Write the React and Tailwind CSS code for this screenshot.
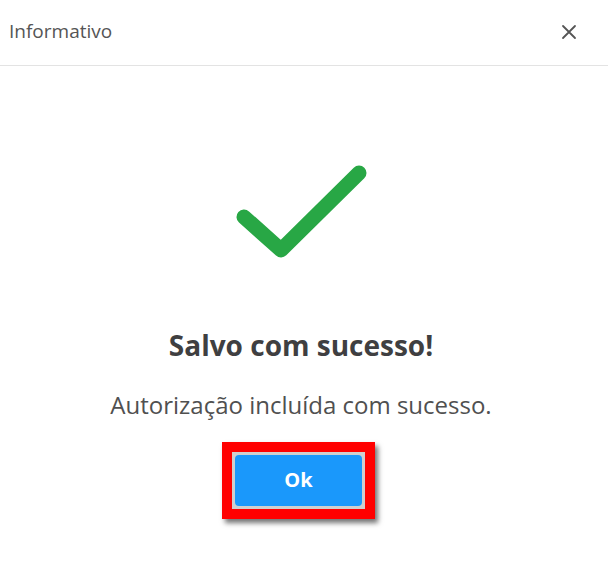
import React from 'react';

const CheckIcon = () => (
  <svg width="140" height="102" viewBox="0 0 140 102" fill="none">
    <path
      d="M13 57 L50 90 L128 13"
      stroke="#28a745"
      strokeWidth="15"
      strokeLinecap="round"
      strokeLinejoin="round"
    />
  </svg>
);

const CloseIcon = () => (
  <svg width="16" height="16" viewBox="0 0 16 16" fill="none">
    <path d="M2 2 L14 14 M14 2 L2 14" stroke="#555" strokeWidth="1.8" strokeLinecap="round" />
  </svg>
);

export default function App() {
  const font = { fontFamily: '"Open Sans", Lato, sans-serif' };

  return (
    <div className="w-[608px] h-[561px] bg-white overflow-hidden" style={font}>
      {/* Header */}
      <div className="h-[66px] flex items-center justify-between pl-[9px] pr-[31px] border-b border-[#e3e3e3]">
        <span className="text-[19px] leading-[26px] text-[#555] -mt-[3px]">Informativo</span>
        <button className="-mt-[2px]">
          <CloseIcon />
        </button>
      </div>

      {/* Body */}
      <div className="flex flex-col items-center pt-[94px] pr-[6px]">
        <CheckIcon />
        <h2 className="mt-[65px] text-[28px] leading-[36px] font-bold text-[#3f3f41]">Salvo com sucesso!</h2>
        <p className="mt-[26px] text-[24px] leading-[32px] text-[#505050]">Autorização incluída com sucesso.</p>
        <div className="mt-[21px] -ml-[5px] w-[153px] h-[77px] border-[10px] border-[#ff0000] shadow-[3px_4px_5px_rgba(0,0,0,0.55)]">
          <div className="w-full h-full p-[3px] bg-[#cfcfcf]">
            <button className="w-full h-full rounded-[4px] bg-[#1a98fb] text-white font-bold text-[20px] leading-none pb-[2px]">Ok</button>
          </div>
        </div>
      </div>
    </div>
  );
}
